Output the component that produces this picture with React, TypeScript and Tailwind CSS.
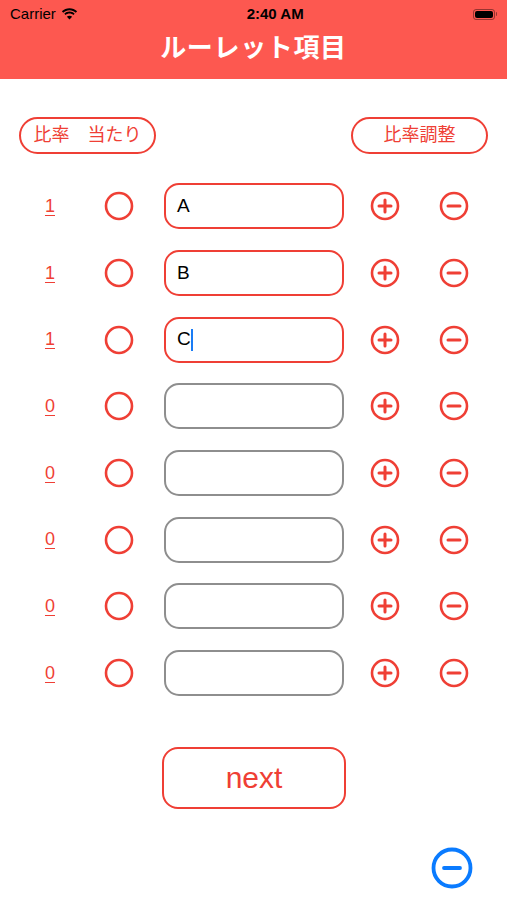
const rows = [
  { ratio: "1", text: "A", filled: true },
  { ratio: "1", text: "B", filled: true },
  { ratio: "1", text: "C", filled: true, caret: true },
  { ratio: "0", text: "", filled: false },
  { ratio: "0", text: "", filled: false },
  { ratio: "0", text: "", filled: false },
  { ratio: "0", text: "", filled: false },
  { ratio: "0", text: "", filled: false },
];

const font = { fontFamily: '"Liberation Sans", "Noto Sans CJK JP", sans-serif' };

function CircleIcon({ kind }: { kind: "empty" | "plus" | "minus" }) {
  return (
    <svg width="30" height="30" viewBox="0 0 30 30" fill="none" stroke="#ef3f35" strokeWidth="2.6" strokeLinecap="round">
      <circle cx="15" cy="15" r="13" />
      {kind !== "empty" && <line x1="9" y1="15" x2="21" y2="15" strokeWidth="3" />}
      {kind === "plus" && <line x1="15" y1="9" x2="15" y2="21" strokeWidth="3" />}
    </svg>
  );
}

function StatusBar() {
  return (
    <div className="flex h-[28px] items-center justify-between px-[10px] text-[15px] text-black">
      <div className="flex items-center gap-[5px]">
        <span>Carrier</span>
        <svg width="17" height="12" viewBox="0 0 17 12" fill="#000">
          <path d="M8.5 2.2c2.4 0 4.6.9 6.3 2.5l1.3-1.4C14 1.3 11.4.2 8.5.2S3 1.3.9 3.3l1.3 1.4C3.9 3.1 6.1 2.2 8.5 2.2z" />
          <path d="M8.5 5.6c1.5 0 2.8.5 3.9 1.5l1.3-1.4C12.3 4.4 10.5 3.6 8.5 3.6s-3.8.8-5.2 2.1l1.3 1.4c1.1-1 2.4-1.5 3.9-1.5z" />
          <path d="M8.5 11.6l2.6-2.8c-.7-.6-1.6-1-2.6-1s-1.9.4-2.6 1z" />
        </svg>
      </div>
      <span className="font-bold">2:40 AM</span>
      <div className="flex items-center">
        <div className="h-[11px] w-[22px] rounded-[3px] border border-black/40 p-[1px]">
          <div className="h-full w-full rounded-[2px] bg-black" />
        </div>
        <div className="ml-[1px] h-[4px] w-[1.5px] rounded-r bg-black/40" />
      </div>
    </div>
  );
}

export default function App() {
  return (
    <div className="min-h-[900px] w-[507px] bg-white" style={font}>
      <header className="h-[79px] bg-[#fd5850]">
        <StatusBar />
        <h1 className="text-center text-[26px] font-bold leading-[40px] tracking-wide text-white">ルーレット項目</h1>
      </header>

      <div className="mt-[38px] flex justify-between px-[19px]">
        <button className="flex h-[37px] w-[137px] items-center justify-center rounded-full border-2 border-[#ef3f35] text-[18px] text-[#ef3f35]">
          比率　当たり
        </button>
        <button className="flex h-[37px] w-[137px] items-center justify-center rounded-full border-2 border-[#ef3f35] text-[18px] text-[#ef3f35]">
          比率調整
        </button>
      </div>

      <div className="mt-[19px]">
        {rows.map((row, i) => (
          <div key={i} className="flex h-[66.7px] items-center">
            <div className="flex w-[100px] justify-center">
              <span className="text-[18px] text-[#ef3f35] underline underline-offset-[3px]">{row.ratio}</span>
            </div>
            <div className="flex w-[38px] justify-center">
              <CircleIcon kind="empty" />
            </div>
            <div
              className={`ml-[26px] flex h-[46px] w-[180px] items-center rounded-[15px] border-2 px-[11px] text-[19px] text-black ${
                row.filled ? "border-[#ef3f35]" : "border-[#8e8e8e]"
              }`}
            >
              <span>{row.text}</span>
              {row.caret && <span className="h-[22px] w-[2px] bg-[#1a7cf5]" />}
            </div>
            <div className="flex w-[82px] justify-center">
              <CircleIcon kind="plus" />
            </div>
            <div className="flex w-[56px] justify-center">
              <CircleIcon kind="minus" />
            </div>
          </div>
        ))}
      </div>

      <div className="mt-[40px] flex pl-[162px]">
        <button className="flex h-[62px] w-[184px] items-center justify-center rounded-[16px] border-2 border-[#ef3f35] text-[30px] text-[#ef3f35]">
          next
        </button>
      </div>

      <div className="mt-[38px] flex justify-end pr-[34px]">
        <svg width="42" height="42" viewBox="0 0 42 42" fill="none" stroke="#0a7bff" strokeWidth="3.8" strokeLinecap="round">
          <circle cx="21" cy="21" r="18.5" />
          <line x1="13" y1="21" x2="29" y2="21" />
        </svg>
      </div>
    </div>
  );
}
